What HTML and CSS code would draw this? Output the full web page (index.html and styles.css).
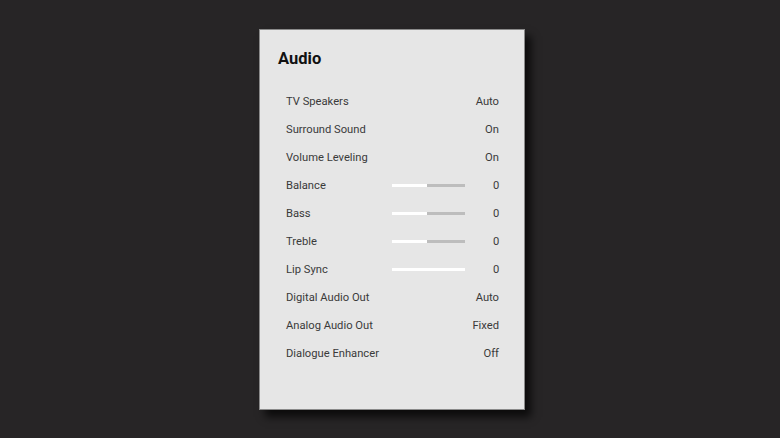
FILE: index.html
```html
<!DOCTYPE html>
<html>
<head>
<meta charset="utf-8">
<link rel="stylesheet" href="styles.css">
</head>
<body>
<div class="panel">
  <h1 class="title">Audio</h1>
  <ul class="list">
    <li class="row"><span class="label">TV Speakers</span><span class="value">Auto</span></li>
    <li class="row"><span class="label">Surround Sound</span><span class="value">On</span></li>
    <li class="row"><span class="label">Volume Leveling</span><span class="value">On</span></li>
    <li class="row"><span class="label">Balance</span><span class="slider"><span class="fill" style="width:48%"></span></span><span class="value num">0</span></li>
    <li class="row"><span class="label">Bass</span><span class="slider"><span class="fill" style="width:48%"></span></span><span class="value num">0</span></li>
    <li class="row"><span class="label">Treble</span><span class="slider"><span class="fill" style="width:48%"></span></span><span class="value num">0</span></li>
    <li class="row"><span class="label">Lip Sync</span><span class="slider"><span class="fill" style="width:100%"></span></span><span class="value num">0</span></li>
    <li class="row"><span class="label">Digital Audio Out</span><span class="value">Auto</span></li>
    <li class="row"><span class="label">Analog Audio Out</span><span class="value">Fixed</span></li>
    <li class="row"><span class="label">Dialogue Enhancer</span><span class="value">Off</span></li>
  </ul>
</div>
</body>
</html>
```
FILE: styles.css
```css
html, body {
  margin: 0;
  height: 100%;
}
body {
  background: #272526;
  padding: 29px 0 0 259px;
  box-sizing: border-box;
  font-family: Roboto, "Liberation Sans", sans-serif;
}
.panel {
  width: 266px;
  height: 381px;
  box-sizing: border-box;
  background: #e6e6e6;
  border: 1px solid #8a8a8a;
  box-shadow: 6px 7px 8px rgba(0,0,0,0.7);
  padding: 20px 25px 0 18px;
}
.title {
  margin: 0;
  font-size: 16.5px;
  font-weight: 700;
  color: #111;
  line-height: 18px;
}
.list {
  list-style: none;
  margin: 19px 0 0 8px;
  padding: 0;
}
.row {
  display: flex;
  align-items: center;
  height: 28px;
  font-size: 11.2px;
  font-weight: 400;
  color: #3a3a3a;
}
.label {
  flex: 1;
}
.slider {
  width: 73px;
  height: 3px;
  background: #bdbdbd;
  margin-right: 28px;
  display: flex;
}
.fill {
  background: #fff;
  height: 100%;
}
.value {
  text-align: right;
}
.num {
  width: 6px;
}
```
